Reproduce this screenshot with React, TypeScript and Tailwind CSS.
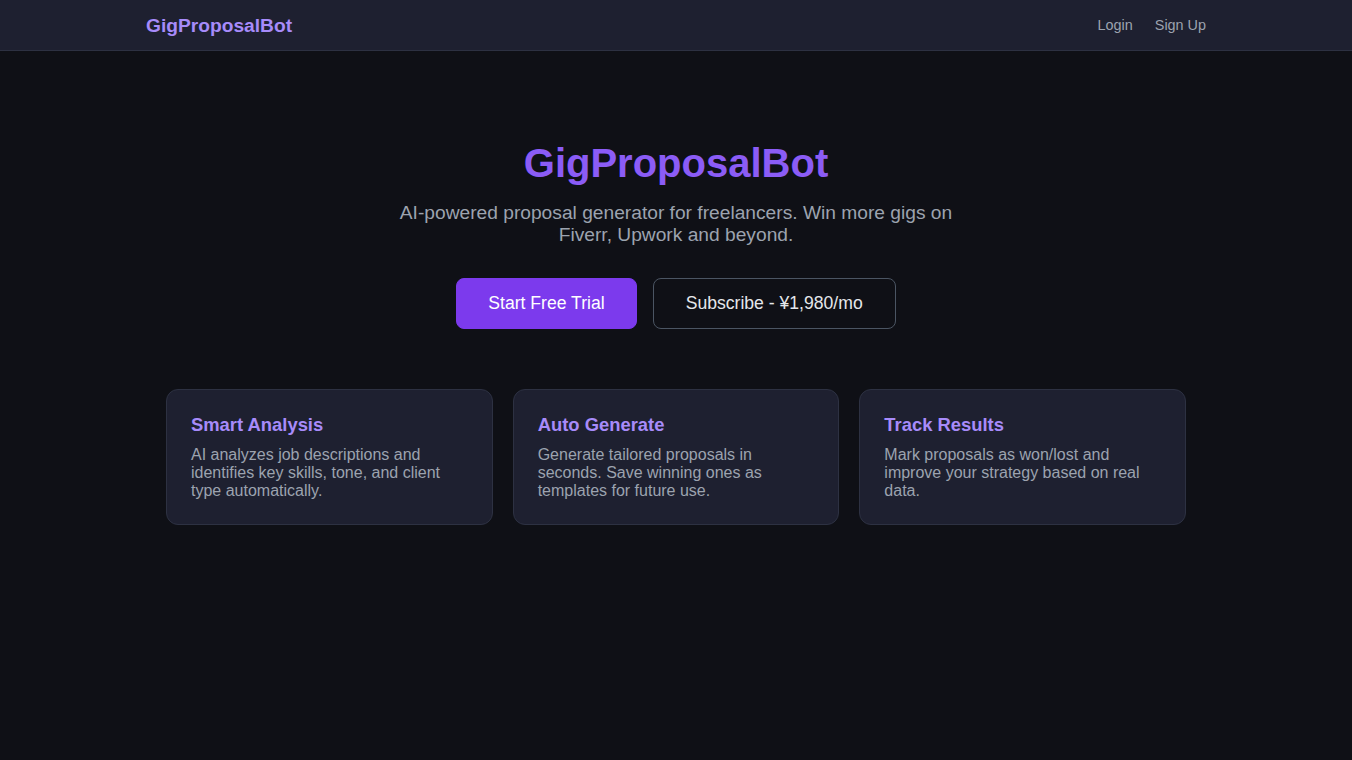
import React from "react";

const font = { fontFamily: '"Liberation Sans", Arial, sans-serif' };

function Card({ title, text }: { title: string; text: string }) {
  return (
    <div className="rounded-[12px] border border-[#2d3142] bg-[#1e2030] p-6">
      <h3 className="mb-[11px] text-[18.4px] font-bold leading-[21px] text-[#a78bfa]">{title}</h3>
      <p className="text-[16px] leading-[18px] text-[#9ca3af]">{text}</p>
    </div>
  );
}

export default function App() {
  return (
    <div className="min-h-[760px] bg-[#0f1016] text-white" style={font}>
      <header className="border-b border-[#2d3142] bg-[#1e2030]">
        <div className="mx-auto flex h-[50px] max-w-[1100px] items-center justify-between px-5 pt-[2px]">
          <span className="text-[19.2px] font-bold text-[#a78bfa]">GigProposalBot</span>
          <nav className="flex gap-[22px] text-[14.4px] text-[#9ca3af]">
            <a>Login</a>
            <a>Sign Up</a>
          </nav>
        </div>
      </header>
      <main className="mx-auto max-w-[1100px] px-5 pt-[89px] text-center">
        <h1 className="text-[40px] font-bold leading-[46px] text-[#8b5cf6]">GigProposalBot</h1>
        <p className="mx-auto mt-[16px] max-w-[600px] text-[19.2px] leading-[22px] text-[#9ca3af]">
          AI-powered proposal generator for freelancers. Win more gigs on Fiverr, Upwork and beyond.
        </p>
        <div className="mt-[32px] flex justify-center gap-4">
          <button className="h-[51px] rounded-[8px] border border-[#7c3aed] bg-[#7c3aed] px-[31px] text-[17.6px] text-white">
            Start Free Trial
          </button>
          <button className="h-[51px] rounded-[8px] border border-[#4b5563] bg-transparent px-[32px] text-[17.6px] text-[#e5e7eb]">
            Subscribe - ¥1,980/mo
          </button>
        </div>
        <div className="mx-auto mt-[60px] grid max-w-[1020px] grid-cols-3 gap-5 text-left">
          <Card
            title="Smart Analysis"
            text="AI analyzes job descriptions and identifies key skills, tone, and client type automatically."
          />
          <Card
            title="Auto Generate"
            text="Generate tailored proposals in seconds. Save winning ones as templates for future use."
          />
          <Card
            title="Track Results"
            text="Mark proposals as won/lost and improve your strategy based on real data."
          />
        </div>
      </main>
    </div>
  );
}
